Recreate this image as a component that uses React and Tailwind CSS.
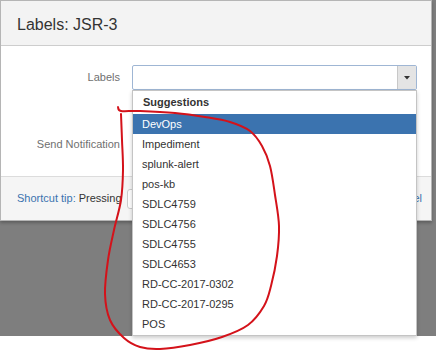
import React from 'react';

const suggestions = [
  'DevOps',
  'Impediment',
  'splunk-alert',
  'pos-kb',
  'SDLC4759',
  'SDLC4756',
  'SDLC4755',
  'SDLC4653',
  'RD-CC-2017-0302',
  'RD-CC-2017-0295',
  'POS',
];

// hand-drawn red loop around the suggestions
const loopPoints = [
  [118, 107], [121, 111], [140, 111], [175, 113], [205, 117], [230, 122],
  [250, 131], [262, 146], [270, 166], [275, 195], [279, 226], [277, 256],
  [271, 286], [264, 306], [248, 325], [222, 337], [190, 345], [160, 349],
  [140, 347], [124, 338], [110, 320], [105, 294], [108, 260], [114, 230],
  [121, 200], [123, 170], [122, 140], [121, 114],
];

const smoothPath = (pts) => {
  let d = `M ${pts[0][0]} ${pts[0][1]}`;
  for (let i = 0; i < pts.length - 1; i++) {
    const p0 = pts[i - 1] || pts[i];
    const p1 = pts[i];
    const p2 = pts[i + 1];
    const p3 = pts[i + 2] || p2;
    const c1x = p1[0] + (p2[0] - p0[0]) / 6;
    const c1y = p1[1] + (p2[1] - p0[1]) / 6;
    const c2x = p2[0] - (p3[0] - p1[0]) / 6;
    const c2y = p2[1] - (p3[1] - p1[1]) / 6;
    d += ` C ${c1x} ${c1y} ${c2x} ${c2y} ${p2[0]} ${p2[1]}`;
  }
  return d;
};

const App = () => {
  return (
    <div className="relative w-[436px] h-[351px] overflow-hidden bg-white text-[#333] font-['Liberation_Sans',Arial,sans-serif]">
      {/* backdrop + dialog */}
      <div className="h-[336px] bg-[#7e7e7e] flex items-start">
        <div className="w-[432px] h-[221px] bg-white border border-[#b5b5b5] flex flex-col shadow-[0_2px_3px_rgba(0,0,0,0.25)]">
          <div className="h-[45px] shrink-0 bg-[#f3f3f3] border-b border-[#cdcdcd] px-[16px] pt-[3px] flex items-center text-[16px] text-[#333]">
            Labels: JSR-3
          </div>

          <div className="flex-1 flex flex-col">
            <div className="mt-[19px] flex items-center">
              <div className="w-[119px] text-right text-[11px] text-[#707070]">Labels</div>
              <div className="ml-[12px] w-[285px] h-[25px] border border-[#9fb6d4] rounded-[2px] flex justify-end bg-white">
                <div className="w-[19px] h-full bg-[#e4e4e4] border-l border-[#c8c8c8] flex items-center justify-center">
                  <svg width="6" height="4" viewBox="0 0 6 4">
                    <path d="M0 0 L6 0 L3 3.5 Z" fill="#333" />
                  </svg>
                </div>
              </div>
            </div>
            <div className="mt-[46px] flex items-center">
              <div className="w-[119px] text-right text-[11px] text-[#707070]">Send Notification</div>
            </div>
          </div>

          <div className="h-[44px] shrink-0 bg-[#f5f5f5] border-t border-[#dcdcdc] pl-[16px] pr-[9px] flex items-center justify-between text-[11px]">
            <div className="flex items-center">
              <span className="text-[#3b73af]">Shortcut tip:</span>
              <span className="ml-[3px] text-[#333]">Pressing</span>
              <span className="ml-[5px] w-[30px] h-[20px] border border-[#ccc] rounded-[3px] bg-white" />
            </div>
            <span className="text-[#3b73af]">Cancel</span>
          </div>
        </div>
      </div>

      {/* suggestions dropdown */}
      <div className="absolute left-[132px] top-[90px] w-[285px] h-[246px] bg-white border border-[#c4c4c4] shadow-[0_2px_4px_rgba(0,0,0,0.2)] text-[11px]">
        <div className="h-[23px] pl-[10px] flex items-center font-bold text-[#333]">Suggestions</div>
        {suggestions.map((s, i) => (
          <div
            key={s}
            className={
              i === 0
                ? 'h-[20px] pl-[9px] flex items-center bg-[#3b73af] text-white'
                : 'h-[20px] pl-[9px] flex items-center text-[#333]'
            }
          >
            {s}
          </div>
        ))}
      </div>

      {/* red annotation */}
      <svg className="absolute inset-0 pointer-events-none" width="436" height="351" viewBox="0 0 436 351">
        <path d={smoothPath(loopPoints)} fill="none" stroke="#d4121a" strokeWidth="2" strokeLinecap="round" strokeLinejoin="round" />
      </svg>
    </div>
  );
};

export default App;
